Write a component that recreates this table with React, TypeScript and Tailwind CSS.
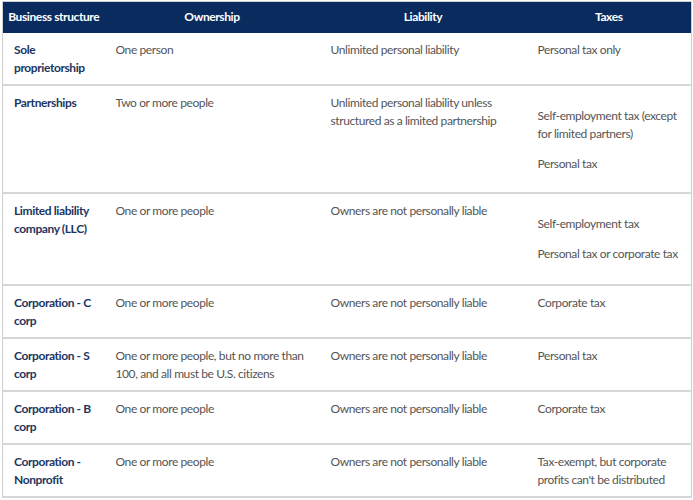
type Row = {
  name: string;
  ownership: string;
  liability: string;
  taxes: string[];
  spaced?: boolean;
  tall?: boolean;
};

const ROWS: Row[] = [
  { name: "Sole proprietorship", ownership: "One person", liability: "Unlimited personal liability", taxes: ["Personal tax only"] },
  {
    name: "Partnerships",
    ownership: "Two or more people",
    liability: "Unlimited personal liability unless structured as a limited partnership",
    taxes: ["Self-employment tax (except for limited partners)", "Personal tax"],
    spaced: true,
  },
  {
    name: "Limited liability company (LLC)",
    ownership: "One or more people",
    liability: "Owners are not personally liable",
    taxes: ["Self-employment tax", "Personal tax or corporate tax"],
    spaced: true,
    tall: true,
  },
  { name: "Corporation - C corp", ownership: "One or more people", liability: "Owners are not personally liable", taxes: ["Corporate tax"] },
  {
    name: "Corporation - S corp",
    ownership: "One or more people, but no more than 100, and all must be U.S. citizens",
    liability: "Owners are not personally liable",
    taxes: ["Personal tax"],
  },
  { name: "Corporation - B corp", ownership: "One or more people", liability: "Owners are not personally liable", taxes: ["Corporate tax"] },
  {
    name: "Corporation - Nonprofit",
    ownership: "One or more people",
    liability: "Owners are not personally liable",
    taxes: ["Tax-exempt, but corporate profits can't be distributed"],
  },
];

export default function App() {
  return (
    <div className="w-[693px] h-[500px] bg-white pt-[1px] px-[2px] font-['Lato',sans-serif]">
      <table className="w-[689px] table-fixed border-collapse border border-[#cfcfcf] text-[12px] leading-[18px] tracking-[-0.4px]">
        <colgroup>
          <col className="w-[102px]" />
          <col className="w-[215px]" />
          <col className="w-[207px]" />
          <col className="w-[165px]" />
        </colgroup>
        <thead>
          <tr className="bg-[#0a2b5e] text-white font-bold h-[31px]">
            <th className="px-0 text-center whitespace-nowrap">Business structure</th>
            <th className="px-1 text-center">Ownership</th>
            <th className="px-1 text-center">Liability</th>
            <th className="px-1 text-center">Taxes</th>
          </tr>
        </thead>
        <tbody>
          {ROWS.map((r) => (
            <tr key={r.name} className="border-b-2 border-[#d6d6d6] align-top">
              <td className="pl-[11px] pr-[6px] pt-[8px] pb-[7px] font-bold text-[#1d3661]">{r.name}</td>
              <td className="pl-[11px] pr-[9px] pt-[8px] pb-[7px] text-[#555555]">{r.ownership}</td>
              <td className="pl-[11px] pr-[8px] pt-[8px] pb-[7px] text-[#555555]">{r.liability}</td>
              <td className="pl-[11px] pr-[8px] pt-[8px] pb-[7px] text-[#555555]">
                {r.spaced ? (
                  <div className={r.tall ? "flex flex-col gap-3 pt-[13px] pb-[14px]" : "flex flex-col gap-3 pt-[13px] pb-3"}>
                    {r.taxes.map((t) => (
                      <p key={t}>{t}</p>
                    ))}
                  </div>
                ) : (
                  r.taxes.map((t) => <p key={t}>{t}</p>)
                )}
              </td>
            </tr>
          ))}
        </tbody>
      </table>
    </div>
  );
}
